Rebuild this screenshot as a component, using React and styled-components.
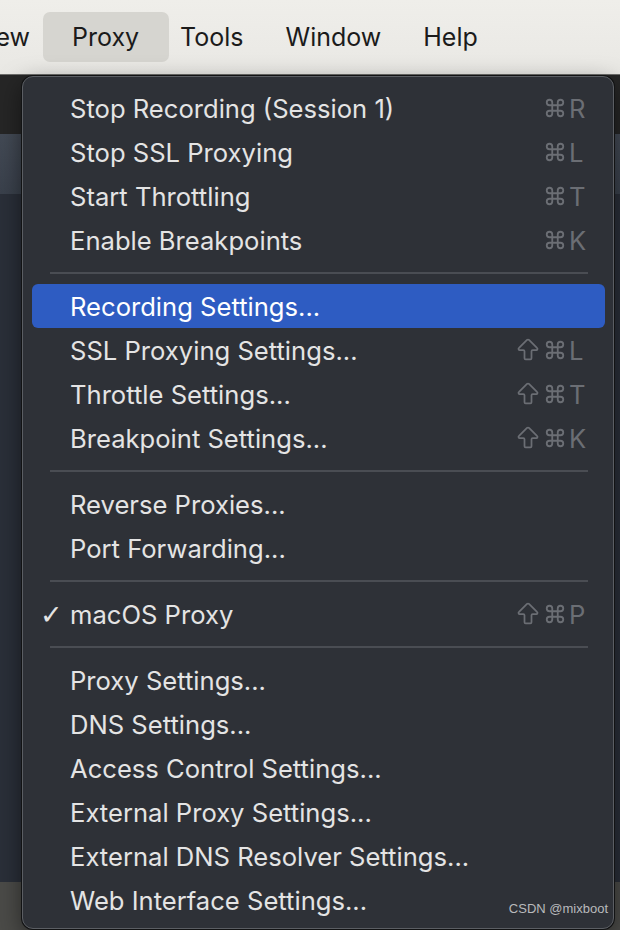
import styled, { createGlobalStyle } from 'styled-components';
import { ArrowBigUp, Command } from 'lucide-react';

const GlobalStyle = createGlobalStyle`
  html, body {
    margin: 0;
    padding: 0;
    width: 620px;
    height: 930px;
    overflow: hidden;
    background: #2b303a;
    font-family: Inter, "Liberation Sans", sans-serif;
  }
`;

const MENUBAR = ['ew', 'Proxy', 'Tools', 'Window', 'Help'];

const ITEMS = [
  { label: 'Stop Recording (Session 1)', key: 'R' },
  { label: 'Stop SSL Proxying', key: 'L' },
  { label: 'Start Throttling', key: 'T' },
  { label: 'Enable Breakpoints', key: 'K' },
  { sep: true },
  { label: 'Recording Settings...', active: true },
  { label: 'SSL Proxying Settings...', key: 'L', shift: true },
  { label: 'Throttle Settings...', key: 'T', shift: true },
  { label: 'Breakpoint Settings...', key: 'K', shift: true },
  { sep: true },
  { label: 'Reverse Proxies...' },
  { label: 'Port Forwarding...' },
  { sep: true },
  { label: 'macOS Proxy', key: 'P', shift: true, checked: true },
  { sep: true },
  { label: 'Proxy Settings...' },
  { label: 'DNS Settings...' },
  { label: 'Access Control Settings...' },
  { label: 'External Proxy Settings...' },
  { label: 'External DNS Resolver Settings...' },
  { label: 'Web Interface Settings...' },
];

const Shortcut = ({ letter, shift }) => (
  <Keys>
    <ShiftSlot>{shift && <ArrowBigUp size={32} strokeWidth={1.5} />}</ShiftSlot>
    <CmdSlot>
      <Command size={22} strokeWidth={2} />
    </CmdSlot>
    <Letter>{letter}</Letter>
  </Keys>
);

const App = () => (
  <Screen>
    <GlobalStyle />
    <MenuBar>
      {MENUBAR.map((m) => (
        <MenuTitle key={m} $open={m === 'Proxy'} $cut={m === 'ew'}>
          {m}
        </MenuTitle>
      ))}
    </MenuBar>
    <Backdrop>
      <Toolbar />
      <SessionBand />
      <ContentArea />
      <StatusBar />
    </Backdrop>

    <Dropdown>
      {ITEMS.map((it, i) =>
        it.sep ? (
          <Separator key={i} />
        ) : (
          <Item key={i} $active={it.active}>
            <Check>{it.checked ? '✓' : ''}</Check>
            <Label>{it.label}</Label>
            {it.key && <Shortcut letter={it.key} shift={it.shift} />}
          </Item>
        )
      )}
    </Dropdown>
    <Watermark>CSDN @mixboot</Watermark>
  </Screen>
);

export default App;

const Screen = styled.div`
  position: relative;
  width: 620px;
  height: 930px;
  display: flex;
  flex-direction: column;
  overflow: hidden;
`;

const MenuBar = styled.div`
  height: 75px;
  flex-shrink: 0;
  display: flex;
  align-items: center;
  padding-bottom: 1px;
  background: linear-gradient(#efeeea, #e9e8e4);
  border-bottom: 1px solid #6d6d6b;
  box-sizing: border-box;
`;

const MenuTitle = styled.div`
  height: 50px;
  display: flex;
  align-items: center;
  justify-content: ${(p) => (p.$cut ? 'flex-end' : 'flex-start')};
  box-sizing: border-box;
  width: ${(p) => (p.$cut ? '43px' : 'auto')};
  overflow: hidden;
  padding: ${(p) => (p.$cut ? '0 13px 0 0' : p.$open ? '0 30px 0 29px' : '0 21px')};
  margin-right: ${(p) => (p.$open ? '-10px' : '0')};
  border-radius: 7px;
  background: ${(p) => (p.$open ? '#d6d5d0' : 'transparent')};
  color: #1b1b1b;
  font-size: 25px;
  white-space: nowrap;
`;

const Backdrop = styled.div`
  flex: 1;
  display: flex;
  flex-direction: column;
`;

const Toolbar = styled.div`
  height: 59px;
  background: #262626;
`;

const SessionBand = styled.div`
  height: 60px;
  background: linear-gradient(#434a55, #3a414c);
`;

const ContentArea = styled.div`
  flex: 1;
  background: #2a2f39;
`;

const StatusBar = styled.div`
  height: 48px;
  background: #4b4b48;
`;

const Dropdown = styled.div`
  position: absolute;
  left: 22px;
  top: 76px;
  width: 592px;
  box-sizing: border-box;
  padding: 9px 8px 6px 9px;
  background: #2e3137;
  border: 1px solid #5b5e63;
  border-radius: 11px;
  box-shadow: 0 0 0 1px #121314, 0 8px 24px rgba(0, 0, 0, 0.5);
`;

const Item = styled.div`
  height: 44px;
  display: flex;
  align-items: center;
  padding: 0 12px 0 8px;
  border-radius: 6px;
  background: ${(p) => (p.$active ? '#2e5cc2' : 'transparent')};
  color: ${(p) => (p.$active ? '#ffffff' : '#e4e4e4')};
  font-size: 25.6px;
`;

const Check = styled.span`
  width: 30px;
  flex-shrink: 0;
  font-family: "DejaVu Sans", sans-serif;
  font-size: 27px;
  font-weight: bold;
  color: #e4e4e4;
  line-height: 1;
`;

const Label = styled.span`
  flex: 1;
  white-space: nowrap;
`;

const Keys = styled.span`
  display: flex;
  align-items: center;
  color: #6b6e74;
`;

const ShiftSlot = styled.span`
  width: 28px;
  display: flex;
  justify-content: center;
`;

const CmdSlot = styled.span`
  width: 25px;
  display: flex;
  justify-content: center;
`;

const Letter = styled.span`
  width: 24px;
  padding-left: 2px;
  font-size: 25.6px;
`;

const Separator = styled.div`
  height: 22px;
  display: flex;
  align-items: center;
  padding: 0 17px 0 18px;

  &::after {
    content: '';
    flex: 1;
    height: 2px;
    background: #4a4d53;
  }
`;

const Watermark = styled.div`
  position: absolute;
  right: 12px;
  bottom: 14px;
  font-family: "Liberation Sans", sans-serif;
  font-size: 13px;
  color: #b9babc;
`;
